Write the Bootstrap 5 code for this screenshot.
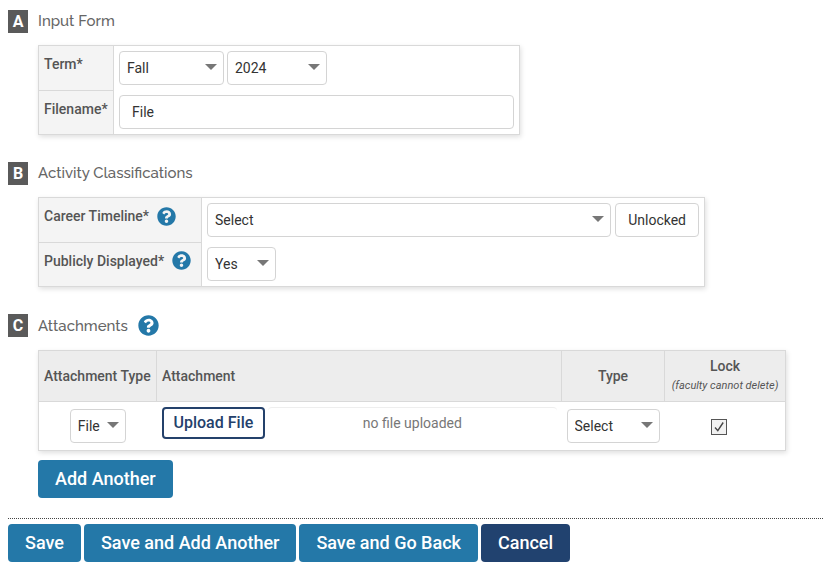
<!DOCTYPE html>
<html lang="en">
<head>
<meta charset="utf-8">
<meta name="viewport" content="width=device-width, initial-scale=1">
<title>Input Form</title>
<link href="https://cdn.jsdelivr.net/npm/bootstrap@5.3.0/dist/css/bootstrap.min.css" rel="stylesheet">
<style>
  body { font: 14px/20px Roboto, "Liberation Sans", sans-serif; color: #333; background: #fff; }
  .page-form { padding: 9px 0 8px 8px; }
  .form-part { margin-bottom: 26px; }
  .part-head { min-height: 24px; margin-bottom: 12px; gap: 10px; }
  .part-letter { width: 20px; height: 23px; line-height: 23px; font-size: 16px; background: #5a5a5a; }
  .part-title { font: 500 15px/24px Raleway, Lato, sans-serif; color: #666; }
  .part-body { margin-left: 30px; }
  .grid-table { border: 1px solid #d9d9d9; box-shadow: 1px 2px 5px rgba(0,0,0,.13); border-collapse: collapse; }
  .grid-table th { font-weight: 500; color: #555; white-space: nowrap; }
  .grid-table th, .grid-table td { padding: 5px; }
  .grid-table tbody th { background: #f4f4f4; border: 1px solid #d9d9d9; vertical-align: top; padding-top: 8px; }
  .grid-table thead th { background: #ededed; border: 1px solid #d9d9d9; height: 51px; }
  .attach-table tbody td { padding-top: 7px; padding-bottom: 7px; }
  .attach-table tbody td.cell-upload { padding-top: 5px; padding-bottom: 5px; }
  .table-term { width: 100%; max-width: 482px; }
  .table-class { width: 100%; max-width: 667px; }
  .attach-table { width: 100%; max-width: 748px; }
  .grid-table .form-select, .grid-table .form-control, .btn-plain {
    height: 34px; border: 1px solid #d4d4d4; border-radius: 4px; font-size: 14px; line-height: 20px; color: #333; }
  .grid-table .form-select { padding: 6px 24px 6px 7px;
    background: #fff url("data:image/svg+xml,%3Csvg xmlns='http://www.w3.org/2000/svg' viewBox='0 0 12 6'%3E%3Cpath fill='%23777' d='M0 0h12L6 6z'/%3E%3C/svg%3E") no-repeat right 6px top 12px / 12px 6px; }
  .grid-table .form-control { padding: 5px 12px; }
  .btn-plain { background: #fff; padding: 5px 12px; }
  .w-term { width: 105px; } .w-year { width: 100px; } .w-yes { width: 69px; } .w-file { width: 56px; } .w-type { width: 93px; }
  .col-label-a { width: 75px; } .col-label-b { width: 163px; }
  .col-kind { width: 118px; } .col-type { width: 103px; } .col-lock { width: 121px; }
  .gap-controls { gap: 3px; }
  .help-btn { border: 0; padding: 0; background: none; color: #2478a8; display: inline-flex; }
  .help-btn svg { width: 19px; height: 19px; fill: currentColor; }
  .part-head .help-btn { padding: 2px 0; }
  .part-head .help-btn svg { width: 21px; height: 21px; }
  .lock-note { font-size: 11px; line-height: 20px; font-weight: 400; font-style: italic; }
  .btn-upload { height: 32px; border: 2px solid #24416b; border-radius: 4px; color: #24416b; background: #fff; font-size: 16px; line-height: 20px; font-weight: 500; padding: 3px 10px; white-space: nowrap; }
  .file-state { border-top: 1px solid #eee; border-radius: 4px; height: 34px; line-height: 31px; color: #777; }
  .lock-box { appearance: none; width: 16px; height: 16px; margin: 0 12px 0 0; border: 1px solid #555;
    background: #f1f1f1 url("data:image/svg+xml,%3Csvg xmlns='http://www.w3.org/2000/svg' viewBox='0 0 14 14'%3E%3Cpath fill='none' stroke='%23444' stroke-width='1.4' d='M3 7.5l2.8 3.2L11.2 2.5'/%3E%3C/svg%3E"); }
  .btn-act { height: 38px; border: 0; border-radius: 4px; padding: 0 17px; font-size: 18px; line-height: 38px; font-weight: 500; color: #fff; background: #2478a8; }
  .btn-act:hover { color: #fff; background: #1d6690; }
  .btn-dark-blue { background: #21426f; }
  .btn-add { margin-top: 9px; }
  .form-end { border-top: 1px dotted #444; margin-top: 20px; padding-top: 5px; gap: 3px; }
</style>
</head>
<body>
<svg class="d-none" aria-hidden="true"><symbol id="help" viewBox="0 0 512 512"><path d="M504 256c0 136.997-111.043 248-248 248S8 392.997 8 256C8 119.083 119.043 8 256 8s248 111.083 248 248zM262.655 90c-54.497 0-89.255 22.957-116.549 63.758-3.536 5.286-2.353 12.415 2.715 16.258l34.699 26.31c5.205 3.947 12.621 3.008 16.665-2.122 17.864-22.658 30.113-35.797 57.303-35.797 20.429 0 45.698 13.148 45.698 32.958 0 14.976-12.363 22.667-32.534 33.976C247.128 238.528 216 254.941 216 296v4c0 6.627 5.373 12 12 12h56c6.627 0 12-5.373 12-12v-1.333c0-28.462 83.186-29.647 83.186-106.667 0-58.002-60.165-102-116.531-102zM256 338c-25.365 0-46 20.635-46 46 0 25.364 20.635 46 46 46s46-20.636 46-46c0-25.364-20.635-46-46-46z"/></symbol></svg>
<form class="page-form">
  <section class="form-part">
    <div class="part-head d-flex align-items-center">
      <span class="part-letter text-white fw-bold text-center">A</span>
      <h2 class="part-title m-0">Input Form</h2>
    </div>
    <div class="part-body">
      <table class="grid-table table-term">
        <tbody>
          <tr>
            <th class="col-label-a" scope="row"><label for="term">Term*</label></th>
            <td><div class="d-flex gap-controls">
              <select class="form-select w-term" id="term"><option>Fall</option></select>
              <select class="form-select w-year" aria-label="Year"><option>2024</option></select>
            </div></td>
          </tr>
          <tr>
            <th scope="row"><label for="filename">Filename*</label></th>
            <td><input class="form-control" type="text" id="filename" value="File"></td>
          </tr>
        </tbody>
      </table>
    </div>
  </section>

  <section class="form-part">
    <div class="part-head d-flex align-items-center">
      <span class="part-letter text-white fw-bold text-center">B</span>
      <h2 class="part-title m-0">Activity Classifications</h2>
    </div>
    <div class="part-body">
      <table class="grid-table table-class">
        <tbody>
          <tr>
            <th class="col-label-b" scope="row"><div class="d-flex align-items-center gap-2"><label for="timeline">Career Timeline*</label>
              <button type="button" class="help-btn" aria-label="Help"><svg><use href="#help"/></svg></button></div></th>
            <td><div class="d-flex gap-1">
              <select class="form-select flex-fill" id="timeline"><option>Select</option></select>
              <button type="button" class="btn-plain">Unlocked</button>
            </div></td>
          </tr>
          <tr>
            <th scope="row"><div class="d-flex align-items-center gap-2"><label for="shown">Publicly Displayed*</label>
              <button type="button" class="help-btn" aria-label="Help"><svg><use href="#help"/></svg></button></div></th>
            <td><select class="form-select w-yes" id="shown"><option>Yes</option></select></td>
          </tr>
        </tbody>
      </table>
    </div>
  </section>

  <section>
    <div class="part-head d-flex align-items-center">
      <span class="part-letter text-white fw-bold text-center">C</span>
      <h2 class="part-title m-0">Attachments</h2>
      <button type="button" class="help-btn" aria-label="Help"><svg><use href="#help"/></svg></button>
    </div>
    <div class="part-body">
      <table class="grid-table attach-table">
        <thead>
          <tr>
            <th class="col-kind" scope="col">Attachment Type</th>
            <th scope="col">Attachment</th>
            <th class="col-type text-center" scope="col">Type</th>
            <th class="col-lock text-center" scope="col">Lock<div class="lock-note">(faculty cannot delete)</div></th>
          </tr>
        </thead>
        <tbody>
          <tr>
            <td><select class="form-select w-file mx-auto" aria-label="Attachment Type"><option>File</option></select></td>
            <td class="cell-upload align-top"><div class="d-flex gap-controls">
              <button type="button" class="btn-upload">Upload File</button>
              <div class="file-state flex-fill text-center">no file uploaded</div>
            </div></td>
            <td><select class="form-select w-type" aria-label="Type"><option>Select</option></select></td>
            <td class="text-center"><input class="lock-box align-middle" type="checkbox" aria-label="Lock" checked></td>
          </tr>
        </tbody>
      </table>
      <button type="button" class="btn btn-act btn-add">Add Another</button>
    </div>
  </section>

  <div class="form-end d-flex flex-wrap">
    <button type="submit" class="btn btn-act">Save</button>
    <button type="submit" class="btn btn-act">Save and Add Another</button>
    <button type="submit" class="btn btn-act">Save and Go Back</button>
    <button type="button" class="btn btn-act btn-dark-blue">Cancel</button>
  </div>
</form>
<script src="https://cdn.jsdelivr.net/npm/bootstrap@5.3.0/dist/js/bootstrap.bundle.min.js"></script>
</body>
</html>
